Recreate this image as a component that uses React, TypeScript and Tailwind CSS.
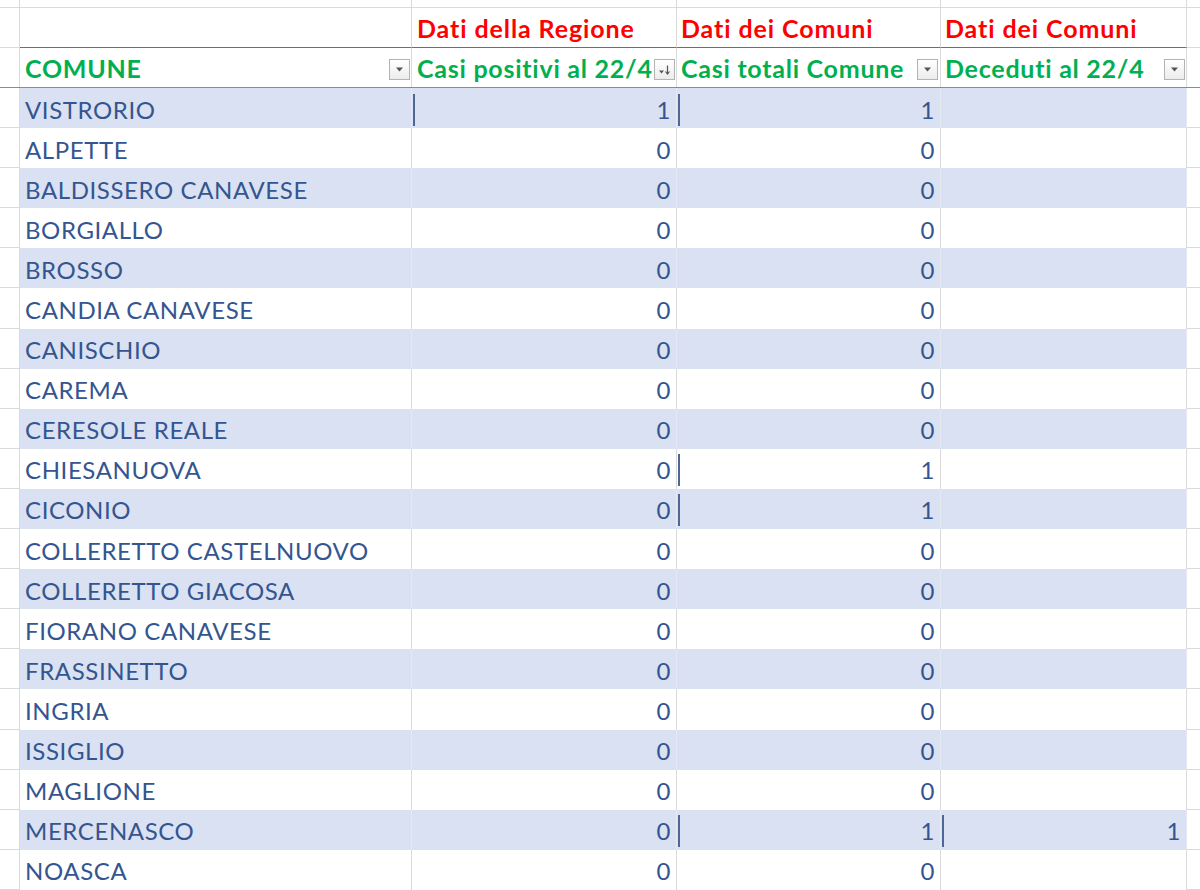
const rows: { name: string; c: number; d: number; e?: number; marks?: string[] }[] = [
  { name: "VISTRORIO", c: 1, d: 1, marks: ["c", "d"] },
  { name: "ALPETTE", c: 0, d: 0 },
  { name: "BALDISSERO CANAVESE", c: 0, d: 0 },
  { name: "BORGIALLO", c: 0, d: 0 },
  { name: "BROSSO", c: 0, d: 0 },
  { name: "CANDIA CANAVESE", c: 0, d: 0 },
  { name: "CANISCHIO", c: 0, d: 0 },
  { name: "CAREMA", c: 0, d: 0 },
  { name: "CERESOLE REALE", c: 0, d: 0 },
  { name: "CHIESANUOVA", c: 0, d: 1, marks: ["d"] },
  { name: "CICONIO", c: 0, d: 1, marks: ["d"] },
  { name: "COLLERETTO CASTELNUOVO", c: 0, d: 0 },
  { name: "COLLERETTO GIACOSA", c: 0, d: 0 },
  { name: "FIORANO CANAVESE", c: 0, d: 0 },
  { name: "FRASSINETTO", c: 0, d: 0 },
  { name: "INGRIA", c: 0, d: 0 },
  { name: "ISSIGLIO", c: 0, d: 0 },
  { name: "MAGLIONE", c: 0, d: 0 },
  { name: "MERCENASCO", c: 0, d: 1, e: 1, marks: ["d", "e"] },
  { name: "NOASCA", c: 0, d: 0 },
];

function FilterButton({ sorted }: { sorted?: boolean }) {
  return (
    <div className="w-[21px] h-[21px] shrink-0 border border-[#b4b4b4] bg-gradient-to-b from-white to-[#ececec] flex items-center justify-center">
      {sorted ? (
        <svg width="15" height="13" viewBox="0 0 15 13">
          <path d="M2 7.5h5l-2.5 3z" fill="#555" />
          <path d="M10.5 2.5v8M8.5 8.5l2 2.5 2-2.5" stroke="#555" strokeWidth="1.2" fill="none" />
        </svg>
      ) : (
        <svg width="9" height="6" viewBox="0 0 9 6">
          <path d="M1 1.5h7l-3.5 4z" fill="#555" />
        </svg>
      )}
    </div>
  );
}

function Mark() {
  return <div className="w-[2px] h-[32px] bg-[#4d6796] shrink-0" />;
}

export default function App() {
  return (
    <div className="w-[1200px] h-[890px] overflow-hidden bg-white font-['Lato',sans-serif]">
      {/* riga superiore tagliata */}
      <div className="flex h-[8px] border-b border-[#dadada]">
        <div className="w-[20px] border-r border-[#dadada]" />
        <div className="w-[392px] border-r border-[#dadada]" />
        <div className="w-[265px] border-r border-[#dadada]" />
        <div className="w-[264px] border-r border-[#dadada]" />
        <div className="w-[246px] border-r border-[#dadada]" />
        <div className="flex-1" />
      </div>

      {/* intestazione rossa */}
      <div className="flex h-[40px] text-[25px] tracking-[0.9px] font-bold text-[#ff0000] whitespace-nowrap">
        <div className="w-[20px] border-r border-b border-[#dadada]" />
        <div className="w-[392px] border-r border-b border-r-[#dadada] border-b-[#4472c4]" />
        <div className="w-[265px] border-r border-b border-r-[#dadada] border-b-[#4472c4] pl-[5px] pt-[3px] flex items-center">Dati della Regione</div>
        <div className="w-[264px] border-r border-b border-r-[#dadada] border-b-[#4472c4] pl-[4px] pt-[3px] flex items-center">Dati dei Comuni</div>
        <div className="w-[246px] border-r border-b border-r-[#dadada] border-b-[#4472c4] pl-[4px] pt-[3px] flex items-center">Dati dei Comuni</div>
        <div className="flex-1 border-b border-[#dadada]" />
      </div>

      {/* intestazione verde */}
      <div className="flex h-[40px] text-[25px] tracking-[0.75px] font-bold text-[#00b050] border-b border-[#8c8c8c] whitespace-nowrap">
        <div className="w-[20px] border-r border-[#dadada]" />
        <div className="w-[392px] border-r border-[#dadada] pl-[5px] pr-[1px] pt-[3px] flex items-center justify-between">
          <span>COMUNE</span>
          <FilterButton />
        </div>
        <div className="w-[265px] border-r border-[#dadada] pl-[5px] pr-[1px] pt-[3px] flex items-center justify-between overflow-hidden">
          <span>Casi positivi al 22/4</span>
          <FilterButton sorted />
        </div>
        <div className="w-[264px] border-r border-[#dadada] pl-[4px] pr-[2px] pt-[3px] flex items-center justify-between overflow-hidden">
          <span>Casi totali Comune</span>
          <FilterButton />
        </div>
        <div className="w-[246px] border-r border-[#dadada] pl-[4px] pr-[1px] pt-[3px] flex items-center justify-between">
          <span>Deceduti al 22/4</span>
          <FilterButton />
        </div>
        <div className="flex-1" />
      </div>

      {rows.map((r, i) => {
        const band = i % 2 === 0;
        const fill = band ? "bg-[#d9e1f2] border-r-[#e4e9f4]" : "bg-white border-r-[#dadada]";
        const has = (k: string) => r.marks?.includes(k);
        return (
          <div key={r.name} className="flex h-[40.1px] text-[24px] tracking-[0.6px] text-[#34558f]">
            <div className="w-[20px] border-r border-b border-[#dadada]" />
            <div className={`w-[392px] border-r pl-[5px] pt-[3px] flex items-center whitespace-nowrap ${fill}`}>{r.name}</div>
            <div className={`w-[265px] border-r pl-[1px] pr-[5px] pt-[3px] flex items-center ${fill}`}>
              {has("c") && <Mark />}
              <span className="ml-auto">{r.c}</span>
            </div>
            <div className={`w-[264px] border-r pl-[1px] pr-[5px] pt-[3px] flex items-center ${fill}`}>
              {has("d") && <Mark />}
              <span className="ml-auto">{r.d}</span>
            </div>
            <div className={`w-[246px] border-r pl-[1px] pr-[5px] pt-[3px] flex items-center ${fill}`}>
              {has("e") && <Mark />}
              <span className="ml-auto">{r.e ?? ""}</span>
            </div>
            <div className="flex-1 border-b border-[#dadada]" />
          </div>
        );
      })}
    </div>
  );
}
